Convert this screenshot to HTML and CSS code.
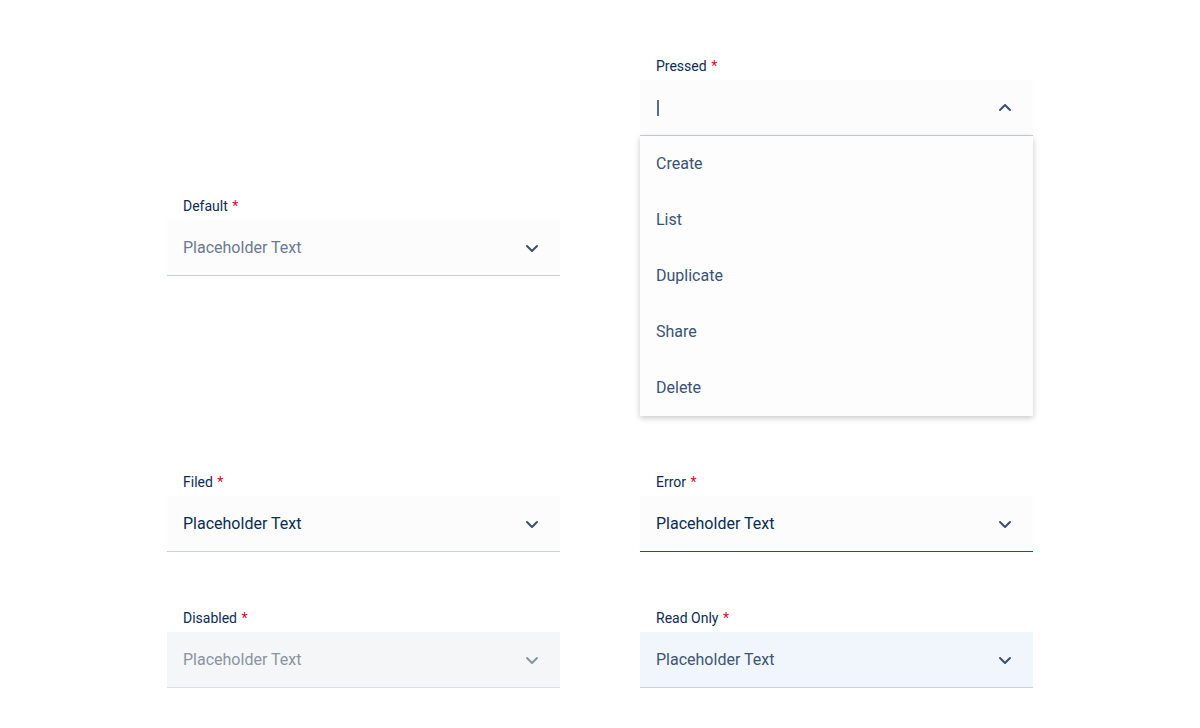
FILE: index.html
```html
<!DOCTYPE html>
<html lang="en">
<head>
    <meta charset="UTF-8">
    <meta name="viewport" content="width=device-width, initial-scale=1.0">
    <title>Select States</title>
    <link rel="stylesheet" href="styles.css">
</head>
<body>
    <div class="grid">
        <div class="field">
            <label class="label">Default <span class="req">*</span></label>
            <div class="control default">
                <span class="value">Placeholder Text</span>
                <svg class="chev" viewBox="0 0 24 24"><path d="M7 10l5 5 5-5"/></svg>
            </div>
        </div>

        <div class="field">
            <label class="label">Pressed <span class="req">*</span></label>
            <div class="control pressed">
                <span class="caret"></span>
                <svg class="chev" viewBox="0 0 24 24"><path d="M7 14l5-5 5 5"/></svg>
            </div>
            <ul class="menu">
                <li>Create</li>
                <li>List</li>
                <li>Duplicate</li>
                <li>Share</li>
                <li>Delete</li>
            </ul>
        </div>

        <div class="field">
            <label class="label">Filed <span class="req">*</span></label>
            <div class="control filled">
                <span class="value">Placeholder Text</span>
                <svg class="chev" viewBox="0 0 24 24"><path d="M7 10l5 5 5-5"/></svg>
            </div>
        </div>

        <div class="field">
            <label class="label">Error <span class="req">*</span></label>
            <div class="control filled error">
                <span class="value">Placeholder Text</span>
                <svg class="chev" viewBox="0 0 24 24"><path d="M7 10l5 5 5-5"/></svg>
            </div>
        </div>

        <div class="field">
            <label class="label">Disabled <span class="req">*</span></label>
            <div class="control disabled">
                <span class="value">Placeholder Text</span>
                <svg class="chev" viewBox="0 0 24 24"><path d="M7 10l5 5 5-5"/></svg>
            </div>
        </div>

        <div class="field">
            <label class="label">Read Only <span class="req">*</span></label>
            <div class="control readonly">
                <span class="value">Placeholder Text</span>
                <svg class="chev" viewBox="0 0 24 24"><path d="M7 10l5 5 5-5"/></svg>
            </div>
        </div>
    </div>
</body>
</html>
```

FILE: styles.css
```css
body {
    font-family: Roboto, "Liberation Sans", sans-serif;
    margin: 0;
    padding: 0;
    background-color: white;
    color: #0b2c4f;
}
.grid {
    display: grid;
    grid-template-columns: 393px 393px;
    column-gap: 80px;
    row-gap: 56px;
    justify-content: center;
    align-items: center;
    padding-top: 56px;
}
.field {
    display: flex;
    flex-direction: column;
}
.label {
    font-size: 14px;
    line-height: 20px;
    padding-left: 16px;
    margin-bottom: 4px;
    color: #0b2c4f;
}
.req {
    color: #c8102e;
    margin-left: 1px;
}
.control {
    display: flex;
    align-items: center;
    justify-content: space-between;
    height: 55px;
    padding: 0 16px;
    background-color: #fcfcfd;
    border-bottom: 1px solid #c9d1dc;
    font-size: 16px;
}
.chev {
    width: 24px;
    height: 24px;
    fill: none;
    stroke: #3d4f6a;
    stroke-width: 2;
    stroke-linecap: round;
    stroke-linejoin: round;
}
.default .value {
    color: #6b7a90;
}
.filled .value {
    color: #0b2c4f;
}
.error {
    border-bottom-color: #a8192e;
}
.disabled {
    background-color: #f5f6f8;
    border-bottom-color: #dde1e6;
}
.disabled .value {
    color: #8a949e;
}
.disabled .chev {
    stroke: #8a949e;
}
.readonly {
    background-color: #f1f6fd;
}
.readonly .value {
    color: #3e5573;
}
.caret {
    width: 2px;
    height: 16px;
    background-color: #5a6e8a;
    margin-left: 1px;
}
.menu {
    list-style: none;
    margin: 0;
    padding: 0;
    background-color: #fdfdfd;
    box-shadow: 0 2px 6px rgba(0, 0, 0, 0.22);
}
.menu li {
    height: 56px;
    line-height: 56px;
    padding-left: 16px;
    font-size: 16px;
    color: #3b5373;
}
```
